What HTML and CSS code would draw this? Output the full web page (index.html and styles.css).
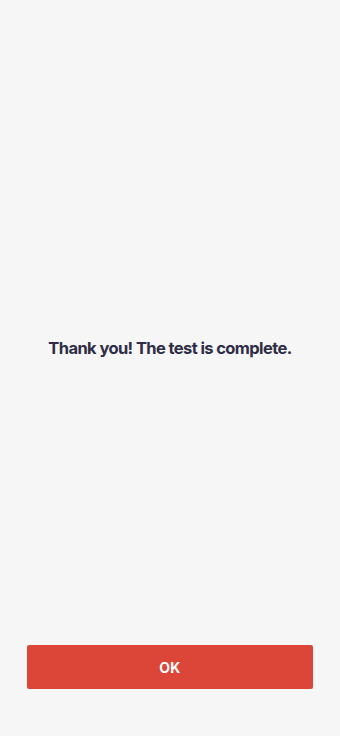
FILE: index.html
```html
<!DOCTYPE html>
<html lang="en">
<head>
<meta charset="utf-8">
<link rel="stylesheet" href="styles.css">
</head>
<body>
<div class="screen">
  <main class="content">
    <p class="message">Thank you! The test is complete.</p>
  </main>
  <footer class="actions">
    <button class="ok-button" type="button">OK</button>
  </footer>
</div>
</body>
</html>
```
FILE: styles.css
```css
html, body {
  margin: 0;
  padding: 0;
  height: 100%;
  background: #f6f6f6;
}
.screen {
  height: 736px;
  display: flex;
  flex-direction: column;
  font-family: Inter, "Noto Sans", sans-serif;
}
.content {
  flex: 1;
  padding-top: 336px;
  display: flex;
  justify-content: center;
}
.message {
  margin: 0;
  font-size: 16.5px;
  line-height: 24px;
  font-weight: 700;
  color: #2e2d45;
  letter-spacing: -0.6px;
}
.actions {
  padding: 0 27px 47px 27px;
}
.ok-button {
  display: block;
  width: 100%;
  height: 44px;
  border: none;
  border-radius: 2px;
  background: #dc4638;
  color: #ffffff;
  font-family: Inter, "Noto Sans", sans-serif;
  font-size: 14px;
  font-weight: 700;
  letter-spacing: 0.2px;
}
```
